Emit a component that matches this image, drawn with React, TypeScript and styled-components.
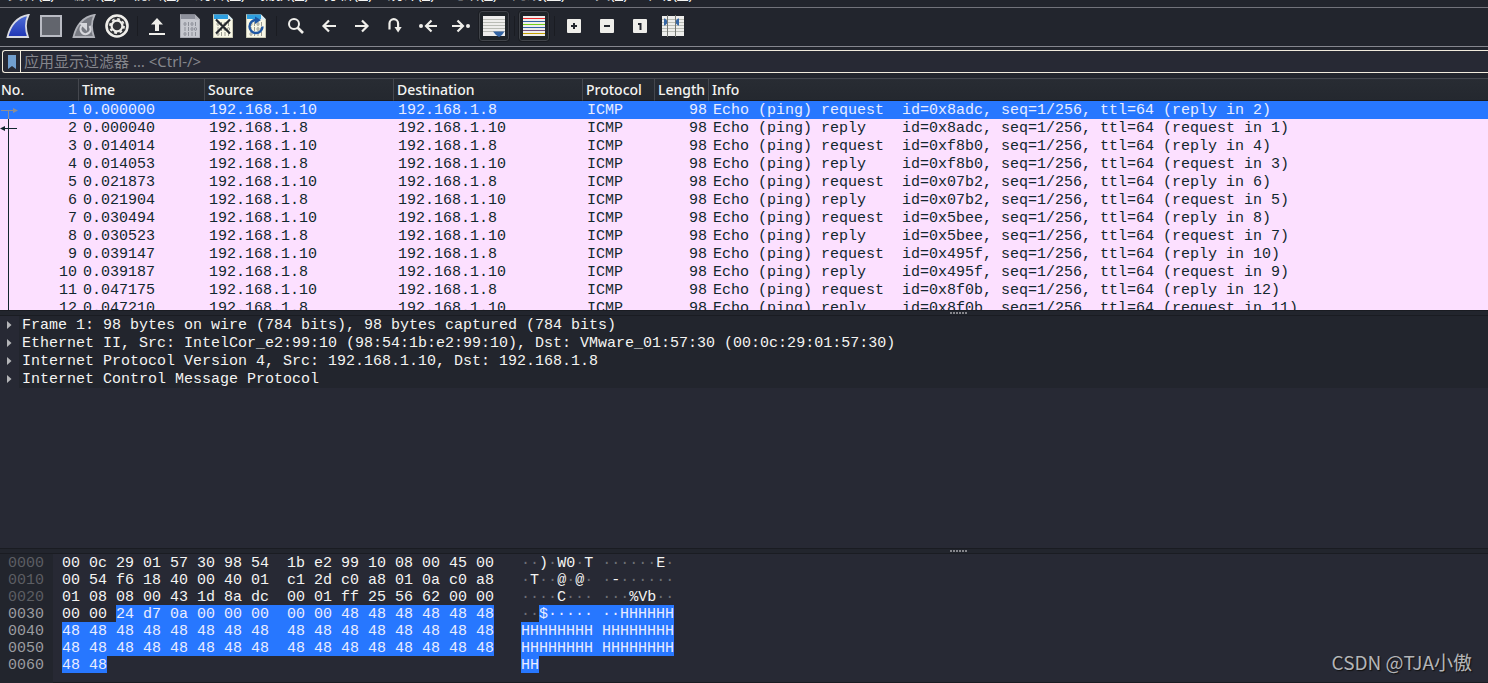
import React from "react";
import styled, { createGlobalStyle, css } from "styled-components";

const color = {
  bar: "#22252d",
  base: "#272934",
  line: "#44474e",
  edge: "#1a1c22",
  cream: "#f1ebdc",
  icon: "#efeeea",
  text: "#f4f4f2",
  select: "#2777ff",
  selectText: "#e9ecff",
  icmp: "#fce0ff",
  icmpText: "#12272e",
};

const ui = `"Noto Sans", "Noto Sans CJK SC", sans-serif`;
const mono = `"Liberation Mono", monospace`;

const Global = createGlobalStyle`
  * { box-sizing: border-box; }
  body { margin: 0; background: ${color.base}; }
  button, input { font: inherit; color: inherit; }
`;

const Window = styled.div`
  display: flex;
  flex-direction: column;
  position: relative;
  height: 100vh;
  overflow: hidden;
  background: ${color.bar};
  color: ${color.text};
  font: 14px/20px ${ui};
`;

const MenuBar = styled.nav`
  flex: none;
  display: flex;
  align-items: flex-end;
  height: 8px;
  overflow: hidden;
  border-bottom: 1px solid #72737b;
`;

const MenuItem = styled.button`
  flex: none;
  border: 0;
  padding: 0 7px 0 8px;
  background: none;
  font-size: 15px;
  line-height: 28px;
  white-space: nowrap;
`;

const Toolbar = styled.div`
  flex: none;
  display: flex;
  align-items: center;
  gap: 1px;
  height: 39px;
  padding: 0 2px 2px;
  border-bottom: 1px solid #85868e;
`;

const ToolButton = styled.button<{ $framed?: boolean }>`
  flex: none;
  display: flex;
  align-items: center;
  justify-content: center;
  width: 32px;
  height: 32px;
  padding: 0;
  border: 1px solid transparent;
  border-radius: 4px;
  background: none;
  ${(p) =>
    p.$framed &&
    css`
      border-color: ${color.edge};
      background: #1f2428;
      box-shadow: inset 0 0 0 1px #41444a;
    `}
`;

const Separator = styled.span`
  flex: none;
  width: 6px;
  height: 20px;
  background: linear-gradient(${color.edge}, ${color.edge}) center / 1px 100% no-repeat;
`;

const FilterBar = styled.div`
  flex: none;
  height: 31px;
  padding: 3px 0 5px 2px;
`;

const FilterBox = styled.div`
  display: flex;
  height: 23px;
  border: 1px solid ${color.cream};
  border-right: 0;
  border-radius: 3px 0 0 3px;
  background: ${color.base};
`;

const Bookmark = styled.button`
  display: flex;
  align-items: center;
  justify-content: center;
  width: 18px;
  padding: 0;
  border: 0;
  border-right: 1px solid ${color.cream};
  background: none;
`;

const FilterInput = styled.input`
  flex: 1;
  min-width: 0;
  padding: 0 3px 2px;
  border: 0;
  outline: 0;
  background: none;
  font-size: 15px;
  &::placeholder {
    color: #85868c;
    opacity: 1;
  }
`;

const PacketPane = styled.section`
  flex: 232 1 0;
  min-height: 0;
  overflow: hidden;
  background: ${color.icmp};
`;

const PacketTable = styled.table`
  width: 100%;
  table-layout: fixed;
  border-collapse: separate;
  border-spacing: 0;
`;

const Col = styled.col<{ $w?: number }>`
  width: ${(p) => (p.$w ? `${p.$w}px` : "auto")};
`;

const Head = styled.th`
  height: 23px;
  padding: 0 0 0 3px;
  border-top: 1px solid ${color.line};
  border-bottom: 1px solid ${color.edge};
  border-right: 1px solid ${color.line};
  background: linear-gradient(#282c33, #24282f);
  font-weight: 500;
  line-height: 20px;
  text-align: left;
  white-space: nowrap;
  &:first-child {
    padding-left: 1px;
  }
  &:last-child {
    border-right: 0;
  }
`;

const PacketRow = styled.tr<{ $selected: boolean }>`
  background: ${(p) => (p.$selected ? color.select : color.icmp)};
  color: ${(p) => (p.$selected ? color.selectText : color.icmpText)};
`;

const Cell = styled.td<{ $right?: boolean }>`
  position: relative;
  height: 18px;
  padding: 1px 2px 0 4px;
  font: 15px/17px ${mono};
  text-align: ${(p) => (p.$right ? "right" : "left")};
  white-space: pre;
`;

const Thread = styled.svg`
  position: absolute;
  left: 0;
  top: 0;
`;

const Splitter = styled.div`
  flex: none;
  height: 6px;
  padding: 1px 0 0 950px;
  border-top: 1px solid ${color.edge};
  border-bottom: 1px solid ${color.edge};
  background: ${color.bar};
`;

const Grip = styled.div`
  width: 17px;
  height: 2px;
  background: repeating-linear-gradient(90deg, #84858a 0 2px, transparent 2px 3px);
`;

const DetailPane = styled.section`
  flex: 232 1 0;
  min-height: 0;
  overflow: hidden;
  background: ${color.base};
`;

const DetailRow = styled.button`
  display: flex;
  width: 100%;
  height: 18px;
  padding: 0;
  border: 0;
  background: none;
  font: 15px/17px ${mono};
  text-align: left;
  white-space: pre;
`;

const Expander = styled.span`
  flex: none;
  display: flex;
  align-items: center;
  width: 19px;
  padding-left: 7px;
`;

const DetailText = styled.span`
  flex: 1;
  padding: 1px 0 0 3px;
  background: ${color.bar};
`;

const HexPane = styled.section`
  flex: 129 1 0;
  min-height: 0;
  display: flex;
  overflow: hidden;
  background: linear-gradient(${color.edge}, ${color.edge}) bottom / 100% 1px no-repeat ${color.base};
  font: 15px/17px ${mono};
  white-space: pre;
`;

const Offsets = styled.div`
  width: 53px;
  padding-left: 8px;
  background: ${color.bar};
`;

const Offset = styled.div<{ $bright: boolean }>`
  height: 17px;
  padding-top: 1px;
  color: ${(p) => (p.$bright ? "#9b9da0" : "#5c5e63")};
`;

const HexColumn = styled.div<{ $wide?: boolean }>`
  padding-left: ${(p) => (p.$wide ? "27px" : "9px")};
`;

const HexLine = styled.div`
  display: flex;
  height: 17px;
  > span {
    padding-top: 1px;
  }
`;

const Marked = styled.span`
  background: ${color.select};
  color: ${color.selectText};
`;

const Dots = styled.span`
  color: #6d6f76;
`;

const Watermark = styled.div`
  position: absolute;
  right: 16px;
  bottom: 7px;
  color: #b4b5b8;
  font: 19px/28px "Noto Sans CJK SC", sans-serif;
  text-shadow: 1px 1px 1px #111;
`;

const Svg = ({ children }: { children: React.ReactNode }) => (
  <svg width="24" height="24" viewBox="0 0 24 24" fill="none" aria-hidden="true">
    {children}
  </svg>
);

const FIN = "M1.5 23C4 12 11 2.500 22.500 1C19 8 19.500 16 22 23Z";

const FinIcon = () => (
  <Svg>
    <defs>
      <linearGradient id="fin" x1="0" y1="0" x2="0" y2="1">
        <stop offset="0" stopColor="#4f6fd8" />
        <stop offset="1" stopColor="#1f35b4" />
      </linearGradient>
    </defs>
    <path d={FIN} fill="url(#fin)" stroke="#d9dbe2" strokeWidth="1.8" />
  </Svg>
);

const StopIcon = () => (
  <Svg>
    <rect x="2" y="2" width="20" height="20" fill="#62656d" stroke="#b9bbc3" strokeWidth="2" />
  </Svg>
);

const RestartIcon = () => (
  <Svg>
    <path d={FIN} fill="#777a82" stroke="#b0b2b9" strokeWidth="1.800" />
    <path d="M10 11.500A5 5 0 1 0 17.500 12" stroke="#d6d7dc" strokeWidth="2.200" />
    <path d="M7 9h8v8z" fill="#d6d7dc" />
  </Svg>
);

const GearIcon = () => (
  <Svg>
    <circle cx="12" cy="12" r="10.500" stroke={color.icon} strokeWidth="2.600" fill="#303236" />
    <circle cx="12" cy="12" r="5.400" stroke={color.icon} strokeWidth="2.200" />
    <circle cx="12" cy="12" r="7" stroke={color.icon} strokeWidth="1.800" strokeDasharray="2.750 2.750" />
  </Svg>
);

const UploadIcon = () => (
  <Svg>
    <path d="M12 4l6 6.500h-4V17h-4v-6.500H6zM4 19h16v2H4z" fill={color.icon} />
  </Svg>
);

const Page = ({ muted, children }: { muted?: boolean; children?: React.ReactNode }) => (
  <Svg>
    <path d="M2 .5h15l5 5v18H2z" fill={muted ? "#c6c8cf" : "#f8f7e6"} />
    <path d="M2 .5h15l1 4.500H2z" fill={muted ? "#8d909b" : "#2e9fe0"} />
    <path d="M17 .5l5 5h-5z" fill={muted ? "#aeb0b8" : "#d7ecf5"} />
    <path d="M2.500 .5V23.500H21.500V5" stroke={muted ? "#a9abb3" : "#c9c9b4"} />
    <g stroke={muted ? "#8c8f98" : "#9b9c92"} strokeWidth="1">
      <ellipse cx="7" cy="10" rx="1" ry="1.500" />
      <path d="M10.500 8v4M17.500 8v4M7 13v4M10.500 13v4M14 18v4M17.500 18v4M10.500 18v4" />
      <ellipse cx="14" cy="10" rx="1" ry="1.500" />
      <ellipse cx="14" cy="15" rx="1" ry="1.500" />
      <ellipse cx="17.500" cy="15" rx="1" ry="1.500" />
      <ellipse cx="7" cy="20" rx="1" ry="1.500" />
    </g>
    {children}
  </Svg>
);

const ClosePageIcon = () => (
  <Page>
    <path d="M5 5.500l14 14M19 5.500l-14 14" stroke="#26292e" strokeWidth="2.200" />
  </Page>
);

const ReloadPageIcon = () => (
  <Page>
    <path d="M12 6A6.500 6.500 0 1 0 18.500 12.500" stroke="#1f57a3" strokeWidth="2.400" />
    <path d="M11 2.500l6 3.500-6 4z" fill="#1f57a3" />
  </Page>
);

const SearchIcon = () => (
  <Svg>
    <circle cx="10" cy="10" r="5" stroke={color.icon} strokeWidth="2" />
    <path d="M13.500 13.500l5.500 5.500" stroke={color.icon} strokeWidth="2.600" />
  </Svg>
);

const BackIcon = () => (
  <Svg>
    <path d="M19 12H7M12 6.500L6.500 12l5.500 5.500" stroke={color.icon} strokeWidth="2.200" />
  </Svg>
);

const ForwardIcon = () => (
  <Svg>
    <path d="M5 12h12M12 6.500l5.500 5.500-5.500 5.500" stroke={color.icon} strokeWidth="2.200" />
  </Svg>
);

const JumpIcon = () => (
  <Svg>
    <path d="M6.500 15.500V9.500a4.300 4.300 0 0 1 8.600 0V14" stroke={color.icon} strokeWidth="2.200" />
    <path d="M11.500 13h7.200L15.100 18.500z" fill={color.icon} />
  </Svg>
);

const FirstIcon = () => (
  <Svg>
    <circle cx="5" cy="12" r="2" fill={color.icon} />
    <path d="M21 12h-10M15.500 6.500L10 12l5.500 5.500" stroke={color.icon} strokeWidth="2.200" />
  </Svg>
);

const LastIcon = () => (
  <Svg>
    <circle cx="19" cy="12" r="2" fill={color.icon} />
    <path d="M3 12h10M8.500 6.500L14 12l-5.500 5.500" stroke={color.icon} strokeWidth="2.200" />
  </Svg>
);

const AutoScrollIcon = () => (
  <Svg>
    <path d="M1 2h22v20H1z" fill="#eeeeec" />
    <path d="M1 5.500h22M1 8.500h22M1 11.500h22M1 14.500h22M1 17.500h22" stroke="#babdb6" />
    <path d="M11 17.500h11.500L20 21l-3 2-3-2z" fill="#3465a4" />
  </Svg>
);

const LINE_COLORS = ["#ef2929", "#3465a4", "#73d216", "#3465a4", "#75507b", "#c4a000"];

const ColorizeIcon = () => (
  <Svg>
    <path d="M1 2h22v20H1z" fill="#eeeeec" />
    {LINE_COLORS.map((c, i) => (
      <path key={i} d={`M1 ${4.5 + i * 3}h22`} stroke={c} />
    ))}
  </Svg>
);

const Badge = ({ d }: { d: string }) => (
  <Svg>
    <rect x="5" y="5" width="14" height="14" rx="1" fill={color.icon} />
    <path d={d} stroke="#22252d" strokeWidth="2" />
  </Svg>
);

const ResizeIcon = () => (
  <Svg>
    <path d="M1 2h22v20H1z" fill="#eeeeec" />
    <path d="M1 5.500h22M1 8.500h22M1 11.500h22M1 14.500h22M1 17.500h22" stroke="#babdb6" />
    <path d="M6.500 1v22M14.500 1v22" stroke="#777975" />
    <path d="M3 4.500h1l2 2v3l-2 2H3zM18 4.500h-1l-2 2v3l2 2h1z" fill="#3465a4" />
  </Svg>
);

type Tool = { label: string; icon: React.ReactNode; framed?: boolean } | null;

const TOOLS: Tool[] = [
  { label: "开始捕获", icon: <FinIcon /> },
  { label: "停止捕获", icon: <StopIcon /> },
  { label: "重新开始捕获", icon: <RestartIcon /> },
  { label: "捕获选项", icon: <GearIcon /> },
  null,
  { label: "打开", icon: <UploadIcon /> },
  { label: "保存", icon: <Page muted /> },
  { label: "关闭", icon: <ClosePageIcon /> },
  { label: "重新加载", icon: <ReloadPageIcon /> },
  null,
  { label: "查找分组", icon: <SearchIcon /> },
  { label: "上一分组", icon: <BackIcon /> },
  { label: "下一分组", icon: <ForwardIcon /> },
  { label: "转到分组", icon: <JumpIcon /> },
  { label: "首个分组", icon: <FirstIcon /> },
  { label: "最新分组", icon: <LastIcon /> },
  { label: "自动滚动", icon: <AutoScrollIcon />, framed: true },
  null,
  { label: "着色", icon: <ColorizeIcon />, framed: true },
  null,
  { label: "放大", icon: <Badge d="M9 12h6M12 9v6" /> },
  { label: "缩小", icon: <Badge d="M9 12h6" /> },
  { label: "普通大小", icon: <Badge d="M10 10h2.500v6" /> },
  { label: "调整列宽", icon: <ResizeIcon /> },
];

const MENUS = [
  ["文件", "F"], ["编辑", "E"], ["视图", "V"], ["跳转", "G"], ["捕获", "C"], ["分析", "A"],
  ["统计", "S"], ["电话", "Y"], ["无线", "W"], ["工具", "T"], ["帮助", "H"],
];

const COLUMNS: [string, number?][] = [
  ["No.", 79], ["Time", 126], ["Source", 189], ["Destination", 189],
  ["Protocol", 72], ["Length", 54], ["Info"],
];

const PACKETS = [
  ["0.000000", "0x8adc"], ["0.000040", "0x8adc"],
  ["0.014014", "0xf8b0"], ["0.014053", "0xf8b0"],
  ["0.021873", "0x07b2"], ["0.021904", "0x07b2"],
  ["0.030494", "0x5bee"], ["0.030523", "0x5bee"],
  ["0.039147", "0x495f"], ["0.039187", "0x495f"],
  ["0.047175", "0x8f0b"], ["0.047210", "0x8f0b"],
].map(([time, id], i) => {
  const request = i % 2 === 0;
  const no = i + 1;
  const kind = request ? "request" : "reply  ";
  const peer = request ? `reply in ${no + 1}` : `request in ${no - 1}`;
  return {
    no,
    time,
    source: request ? "192.168.1.10" : "192.168.1.8",
    destination: request ? "192.168.1.8" : "192.168.1.10",
    info: `Echo (ping) ${kind}  id=${id}, seq=1/256, ttl=64 (${peer})`,
  };
});

const ThreadMark = ({ no }: { no: number }) => (
  <Thread width="20" height="18" viewBox="0 0 20 18" aria-hidden="true">
    {no === 1 ? (
      <>
        <path d="M1 9.500h13M8.500 9.500V18" stroke="#8e8e93" />
        <path d="M13 7l5 2.500-5 2.500z" fill="#8e8e93" />
      </>
    ) : (
      <path d="M8.500 0V18" stroke={color.icmpText} />
    )}
    {no === 2 && (
      <>
        <path d="M4 9.500h13" stroke={color.icmpText} />
        <path d="M5 7L0 9.500 5 12z" fill={color.icmpText} />
      </>
    )}
  </Thread>
);

const DETAILS = [
  "Frame 1: 98 bytes on wire (784 bits), 98 bytes captured (784 bits)",
  "Ethernet II, Src: IntelCor_e2:99:10 (98:54:1b:e2:99:10), Dst: VMware_01:57:30 (00:0c:29:01:57:30)",
  "Internet Protocol Version 4, Src: 192.168.1.10, Dst: 192.168.1.8",
  "Internet Control Message Protocol",
];

const FULL = "48 48 48 48 48 48 48 48  48 48 48 48 48 48 48 48";

/* Each line: offset, plain bytes, marked bytes, plain characters, marked characters. */
const DUMP = [
  ["0000", "00 0c 29 01 57 30 98 54  1b e2 99 10 08 00 45 00", "", "··)·W0·T ······E·", ""],
  ["0010", "00 54 f6 18 40 00 40 01  c1 2d c0 a8 01 0a c0 a8", "", "·T··@·@· ·-······", ""],
  ["0020", "01 08 08 00 43 1d 8a dc  00 01 ff 25 56 62 00 00", "", "····C··· ···%Vb··", ""],
  ["0030", "00 00 ", "24 d7 0a 00 00 00  00 00 48 48 48 48 48 48", "··", "$····· ··HHHHHH"],
  ["0040", "", FULL, "", "HHHHHHHH HHHHHHHH"],
  ["0050", "", FULL, "", "HHHHHHHH HHHHHHHH"],
  ["0060", "", "48 48", "", "HH"],
];

const Plain = ({ text }: { text: string }) => (
  <span>
    {text.split(/(·+)/).map((part, i) => (part[0] === "·" ? <Dots key={i}>{part}</Dots> : part))}
  </span>
);

export default function App() {
  return (
    <Window>
      <Global />
      <MenuBar>
        {MENUS.map(([name, key]) => (
          <MenuItem key={key}>
            {name}(<u>{key}</u>)
          </MenuItem>
        ))}
      </MenuBar>
      <Toolbar role="toolbar">
        {TOOLS.map((tool, i) =>
          tool ? (
            <ToolButton key={i} aria-label={tool.label} $framed={tool.framed}>
              {tool.icon}
            </ToolButton>
          ) : (
            <Separator key={i} />
          ),
        )}
      </Toolbar>
      <FilterBar>
        <FilterBox>
          <Bookmark aria-label="书签">
            <svg width="8" height="14" viewBox="0 0 8 14" aria-hidden="true">
              <path d="M0 0h8v14l-4-3-4 3z" fill="#729fcf" />
            </svg>
          </Bookmark>
          <FilterInput aria-label="显示过滤器" placeholder="应用显示过滤器 … <Ctrl-/>" />
        </FilterBox>
      </FilterBar>
      <PacketPane>
        <PacketTable>
          <colgroup>
            {COLUMNS.map(([name, w]) => (
              <Col key={name} $w={w} />
            ))}
          </colgroup>
          <thead>
            <tr>
              {COLUMNS.map(([name]) => (
                <Head key={name}>{name}</Head>
              ))}
            </tr>
          </thead>
          <tbody>
            {PACKETS.map((p) => (
              <PacketRow key={p.no} $selected={p.no === 1}>
                <Cell $right>
                  <ThreadMark no={p.no} />
                  {p.no}
                </Cell>
                <Cell>{p.time}</Cell>
                <Cell>{p.source}</Cell>
                <Cell>{p.destination}</Cell>
                <Cell>ICMP</Cell>
                <Cell $right>98</Cell>
                <Cell>{p.info}</Cell>
              </PacketRow>
            ))}
          </tbody>
        </PacketTable>
      </PacketPane>
      <Splitter>
        <Grip />
      </Splitter>
      <DetailPane>
        {DETAILS.map((text) => (
          <DetailRow key={text}>
            <Expander>
              <svg width="5" height="8" viewBox="0 0 5 8" aria-hidden="true">
                <path d="M0 0l4.500 4L0 8z" fill="#b4b5b8" />
              </svg>
            </Expander>
            <DetailText>{text}</DetailText>
          </DetailRow>
        ))}
      </DetailPane>
      <Splitter>
        <Grip />
      </Splitter>
      <HexPane>
        <Offsets>
          {DUMP.map(([offset], i) => (
            <Offset key={offset} $bright={i > 2}>
              {offset}
            </Offset>
          ))}
        </Offsets>
        <HexColumn>
          {DUMP.map(([offset, plain, marked]) => (
            <HexLine key={offset}>
              <span>{plain}</span>
              <Marked>{marked}</Marked>
            </HexLine>
          ))}
        </HexColumn>
        <HexColumn $wide>
          {DUMP.map(([offset, , , plain, marked]) => (
            <HexLine key={offset}>
              <Plain text={plain} />
              <Marked>{marked}</Marked>
            </HexLine>
          ))}
        </HexColumn>
      </HexPane>
      <Watermark>CSDN @TJA小傲</Watermark>
    </Window>
  );
}
